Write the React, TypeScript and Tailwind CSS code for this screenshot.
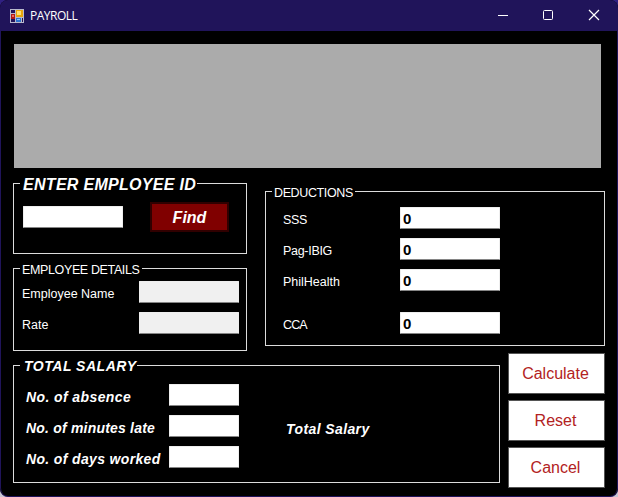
import type { ReactNode } from 'react';

function AppIcon() {
  return (
    <svg width="14" height="14" viewBox="0 0 14 14" shapeRendering="crispEdges">
      <rect width="14" height="14" fill="#b9b9cc" />
      <rect x="1" y="1" width="4" height="3" fill="#20145a" />
      <rect x="1" y="5" width="4" height="5" fill="#b01818" />
      <rect x="2" y="6" width="2" height="2" fill="#ee6a5a" />
      <rect x="1" y="10" width="4" height="3" fill="#20145a" />
      <rect x="6" y="1" width="7" height="7" fill="#e8a50c" />
      <rect x="7" y="2" width="4" height="4" fill="#ffe070" />
      <rect x="6" y="9" width="5" height="4" fill="#2d74cf" />
      <rect x="7" y="10" width="3" height="1" fill="#8cc4ff" />
      <rect x="12" y="9" width="1" height="4" fill="#20145a" />
    </svg>
  );
}

function TitleBar() {
  return (
    <header className="flex h-[31px] shrink-0 items-center bg-[#20145a] pl-2.5">
      <AppIcon />
      <span className="ml-1.5 font-['Open_Sans','Noto_Sans',sans-serif] text-[12px] leading-4 tracking-[-0.5px] text-white">
        PAYROLL
      </span>
      <svg className="ml-auto" width="120" height="31" viewBox="0 0 120 31" fill="none" stroke="#fff">
        <path d="M0 15.5h10" />
        <rect x="45.5" y="10.5" width="9" height="9" rx="1" />
        <path d="M91 10l10 10M101 10l-10 10" strokeWidth="1.2" />
      </svg>
    </header>
  );
}

function Group({ title, frame, titleStyle, children }: { title: string; frame: string; titleStyle: string; children: ReactNode }) {
  return (
    <section className={`border border-[#dcdcdc] ${frame}`}>
      <h2 className={`-mt-2 ml-1.5 h-4 whitespace-nowrap bg-black leading-4 ${titleStyle}`}>{title}</h2>
      {children}
    </section>
  );
}

function Field({ value, look = 'w-[100px] bg-white' }: { value?: string; look?: string }) {
  return (
    <input
      defaultValue={value}
      className={`block h-[22px] shrink-0 rounded-[1px] border border-[#eeeeee] border-b-[#858585] px-[2px] text-[15px] font-bold leading-5 text-black outline-none ${look}`}
    />
  );
}

function Row({ label, style, children }: { label: string; style: string; children: ReactNode }) {
  return (
    <div className="flex h-[22px] justify-between">
      <label className={`whitespace-nowrap ${style}`}>{label}</label>
      {children}
    </div>
  );
}

const plain = 'pt-1 text-[12.5px] leading-[18px]';
const strong = 'pt-1 text-[14px] font-bold italic leading-[18px]';

function Action({ label }: { label: string }) {
  return (
    <button className="h-[41px] w-[97px] border border-[#555555] bg-white pr-0.5 pt-px text-base leading-5 text-[#b22222]">
      {label}
    </button>
  );
}

export default function App() {
  return (
    <div className="h-[497px] w-[618px] bg-linear-to-b from-[#302082] from-50% to-[#c8c6d2] to-50%">
      <div className="flex h-full flex-col overflow-hidden rounded-[8px] border-b border-[#20145a] bg-black font-['Liberation_Sans',Arial,sans-serif] text-white">
        <TitleBar />
        <main className="flex flex-1 flex-col rounded-b-[8px] border-x border-[#20145a] pl-3 pt-[13px]">
          <div className="ml-px h-[124px] w-[587px] shrink-0 bg-[#ababab]" />
          <div className="mt-[15px] flex h-[170px] gap-[18px]">
            <div className="w-[234px]">
              <Group title="ENTER EMPLOYEE ID" frame="h-[71px]" titleStyle="w-[177px] pl-[3px] pt-px text-[16px] font-bold italic tracking-[0.3px]">
                <div className="flex items-start pl-[9px] pt-[10px]">
                  <div className="pt-1"><Field /></div>
                  <button className="ml-[27px] h-[30px] w-[79px] border-2 border-[#300000] bg-[#800000] pt-0.5 text-[16px] font-bold italic leading-5">
                    Find
                  </button>
                </div>
              </Group>
              <Group title="EMPLOYEE DETAILS" frame="mt-[14px] h-[83px]" titleStyle="w-[122px] pl-[2px] pt-px text-[12.5px] tracking-[-0.37px]">
                <div className="flex flex-col gap-[9px] pl-2 pr-[7px] pt-1">
                  <Row label="Employee Name" style={plain}><Field look="w-[100px] bg-[#f0f0f0]" /></Row>
                  <Row label="Rate" style={plain}><Field look="w-[100px] bg-[#f0f0f0]" /></Row>
                </div>
              </Group>
            </div>
            <Group title="DEDUCTIONS" frame="mt-2 h-[155px] w-[340px]" titleStyle="w-[83px] pl-[2px] pt-px text-[12.5px] tracking-[-0.37px]">
              <div className="flex w-[234px] flex-col gap-[9px] pl-[17px] pt-[7px]">
                <Row label="SSS" style={`${plain} tracking-[-0.3px]`}><Field value="0" /></Row>
                <Row label="Pag-IBIG" style={`${plain} tracking-[-0.3px]`}><Field value="0" /></Row>
                <Row label="PhilHealth" style={plain}><Field value="0" /></Row>
                <div className="pt-3"><Row label="CCA" style={`${plain} tracking-[-0.9px]`}><Field value="0" /></Row></div>
              </div>
            </Group>
          </div>
          <div className="flex gap-2">
            <Group title="TOTAL SALARY" frame="mt-3 h-[118px] w-[487px]" titleStyle="w-[117px] pl-1 text-[14px] font-bold italic tracking-[0.52px]">
              <div className="flex pl-3 pt-[10px]">
                <div className="flex w-[213px] flex-col gap-[9px]">
                  <Row label="No. of absence" style={`${strong} tracking-[0.4px]`}><Field look="w-[70px] bg-white" /></Row>
                  <Row label="No. of minutes late" style={`${strong} tracking-[0.2px]`}><Field look="w-[70px] bg-white" /></Row>
                  <Row label="No. of days worked" style={`${strong} tracking-[0.35px]`}><Field look="w-[70px] bg-white" /></Row>
                </div>
                <p className="ml-[47px] mt-[36px] text-[14px] font-bold italic leading-[18px] tracking-[0.4px]">Total Salary</p>
              </div>
            </Group>
            <div className="flex flex-col gap-1.5">
              <Action label="Calculate" />
              <Action label="Reset" />
              <Action label="Cancel" />
            </div>
          </div>
        </main>
      </div>
    </div>
  );
}
